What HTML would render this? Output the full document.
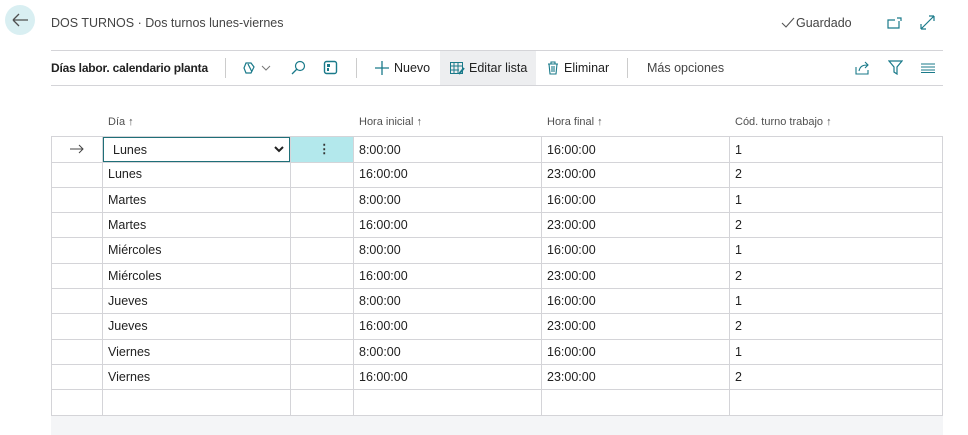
<!DOCTYPE html>
<html><head><meta charset="utf-8"><style>
*{margin:0;padding:0;box-sizing:border-box}
body{width:968px;height:435px;background:#fff;font-family:"Liberation Sans",sans-serif;color:#212121;position:relative;overflow:hidden;font-size:12.5px}
.a{position:absolute;white-space:nowrap}
.hl{position:absolute;height:1px;background:#d4d4d8}
.vl{position:absolute;width:1px;background:#d4d4d8}
.th{position:absolute;top:116px;font-size:11px;color:#505050}
.c{position:absolute;font-size:12.5px}
</style></head><body>
<div class="a" style="left:5px;top:5px;width:30px;height:30px;border-radius:50%;background:#d9eff2"></div>
<svg class="a" style="left:11px;top:13px" width="18" height="14"><path d="M2 7H17M2 7L8 1M2 7L8 13" stroke="#505050" stroke-width="1.3" fill="none"/></svg>
<div class="a" style="left:51px;top:16px;font-size:12.5px;color:#444">DOS TURNOS · Dos turnos lunes-viernes</div>
<svg class="a" style="left:781px;top:17px" width="14" height="11"><path d="M1 6L5 10L13 1" stroke="#555" stroke-width="1.1" fill="none"/></svg>
<div class="a" style="left:796px;top:16px;color:#444">Guardado</div>
<svg class="a" style="left:887px;top:16px" width="16" height="14"><path d="M12 5V12H1V4H8M10 2H14V5" stroke="#1a7a8a" stroke-width="1.2" fill="none"/></svg>
<svg class="a" style="left:920px;top:15px" width="15" height="15"><path d="M1 14L14 1M1 14V9M1 14H6M14 1H9M14 1V6" stroke="#1a7a8a" stroke-width="1.2" fill="none"/></svg>
<div class="hl" style="left:51px;top:50px;width:892px"></div>
<div class="hl" style="left:51px;top:85px;width:892px"></div>
<div class="a" style="left:440px;top:51px;width:96px;height:34px;background:#edeef0"></div>
<div class="a" style="left:51px;top:61px;font-weight:bold;font-size:12px;letter-spacing:-0.2px">Días labor. calendario planta</div>
<div class="vl" style="left:225px;top:58px;height:20px;background:#ccc"></div>
<svg class="a" style="left:242px;top:61px" width="32" height="14"><path d="M4 2H9L12 6L9 12H4L2 7Z M6 3L10 11" stroke="#1a7a8a" stroke-width="1.2" fill="none"/><path d="M20 5L24 9L28 5" stroke="#777" fill="none"/></svg>
<svg class="a" style="left:290px;top:60px" width="16" height="16"><circle cx="10" cy="6" r="4.5" stroke="#1a7a8a" stroke-width="1.2" fill="none"/><path d="M7 9L2 14" stroke="#1a7a8a" stroke-width="1.3"/></svg>
<svg class="a" style="left:323px;top:60px" width="15" height="15"><rect x="1.5" y="1.5" width="12" height="12" rx="2" stroke="#1a7a8a" stroke-width="1.4" fill="none"/><rect x="4" y="4" width="3" height="3" fill="#1a7a8a"/><rect x="4" y="8" width="2" height="3" fill="#1a7a8a"/></svg>
<div class="vl" style="left:356px;top:58px;height:20px;background:#ccc"></div>
<svg class="a" style="left:375px;top:61px" width="14" height="14"><path d="M7 0V14M0 7H14" stroke="#1a7a8a" stroke-width="1.3"/></svg>
<div class="a" style="left:394px;top:61px">Nuevo</div>
<svg class="a" style="left:450px;top:62px" width="15" height="13"><rect x="0.5" y="0.5" width="12" height="11" stroke="#1a7a8a" fill="none"/><path d="M0 4H13M0 8H9M4 0V12M8 0V12" stroke="#1a7a8a"/><path d="M9 12L14 6" stroke="#1a7a8a" stroke-width="2"/></svg>
<div class="a" style="left:469px;top:61px">Editar lista</div>
<svg class="a" style="left:547px;top:61px" width="12" height="14"><path d="M1 3H11M4 3V1H8V3M2 3L3 13H9L10 3M5 5V11M7 5V11" stroke="#1a7a8a" stroke-width="1.1" fill="none"/></svg>
<div class="a" style="left:564px;top:61px">Eliminar</div>
<div class="vl" style="left:627px;top:58px;height:20px;background:#ccc"></div>
<div class="a" style="left:647px;top:61px;color:#444">Más opciones</div>
<svg class="a" style="left:855px;top:61px" width="15" height="14"><path d="M1 6V13H13V9M4 10C5 5 8 4 13 4M10 1L13 4L10 7" stroke="#1a7a8a" stroke-width="1.1" fill="none"/></svg>
<svg class="a" style="left:888px;top:60px" width="15" height="15"><path d="M1 1H14L9 7V14L6 12V7Z" stroke="#1a7a8a" stroke-width="1.2" fill="none"/></svg>
<svg class="a" style="left:921px;top:63px" width="14" height="10"><path d="M0 1H14M0 4H14M0 7H14M0 9.5H14" stroke="#1a7a8a" stroke-width="1.1"/></svg>

<div class="th" style="left:108px">Día ↑</div>
<div class="th" style="left:359px">Hora inicial ↑</div>
<div class="th" style="left:547px">Hora final ↑</div>
<div class="th" style="left:735px">Cód. turno trabajo ↑</div>

<div class="a" style="left:51px;top:415px;width:892px;height:20px;background:#f4f5f7"></div>
<div class="a" style="left:291px;top:137px;width:62px;height:25px;background:#b3e8ec"></div>
<div class="a" style="left:318px;top:141px;color:#333;font-weight:bold">⋮</div>

<div class="hl" style="left:51px;top:136px;width:892px"></div>
<div class="hl" style="left:51px;top:162px;width:892px"></div>
<div class="hl" style="left:51px;top:187px;width:892px"></div>
<div class="hl" style="left:51px;top:212px;width:892px"></div>
<div class="hl" style="left:51px;top:237px;width:892px"></div>
<div class="hl" style="left:51px;top:263px;width:892px"></div>
<div class="hl" style="left:51px;top:288px;width:892px"></div>
<div class="hl" style="left:51px;top:313px;width:892px"></div>
<div class="hl" style="left:51px;top:339px;width:892px"></div>
<div class="hl" style="left:51px;top:364px;width:892px"></div>
<div class="hl" style="left:51px;top:389px;width:892px"></div>
<div class="hl" style="left:51px;top:415px;width:892px"></div>
<div class="vl" style="left:51px;top:136px;height:279px"></div>
<div class="vl" style="left:102px;top:136px;height:279px"></div>
<div class="vl" style="left:290px;top:136px;height:279px"></div>
<div class="vl" style="left:353px;top:136px;height:279px"></div>
<div class="vl" style="left:541px;top:136px;height:279px"></div>
<div class="vl" style="left:729px;top:136px;height:279px"></div>
<div class="vl" style="left:942px;top:136px;height:279px"></div>

<div class="a" style="left:103px;top:137px;width:187px;height:25px;border:1px solid #1f6f78;background:#fff"></div>
<svg class="a" style="left:70px;top:144px" width="14" height="10"><path d="M0 5H13M9 1L13 5L9 9" stroke="#444" fill="none"/></svg>
<svg class="a" style="left:274px;top:146px" width="10" height="7"><path d="M1 1L5 5L9 1" stroke="#222" stroke-width="2" fill="none"/></svg>

<div class="c" style="left:113px;top:143px">Lunes</div><div class="c" style="left:359px;top:143px">8:00:00</div><div class="c" style="left:547px;top:143px">16:00:00</div><div class="c" style="left:735px;top:143px">1</div>
<div class="c" style="left:108px;top:167px">Lunes</div><div class="c" style="left:359px;top:167px">16:00:00</div><div class="c" style="left:547px;top:167px">23:00:00</div><div class="c" style="left:735px;top:167px">2</div>
<div class="c" style="left:108px;top:193px">Martes</div><div class="c" style="left:359px;top:193px">8:00:00</div><div class="c" style="left:547px;top:193px">16:00:00</div><div class="c" style="left:735px;top:193px">1</div>
<div class="c" style="left:108px;top:218px">Martes</div><div class="c" style="left:359px;top:218px">16:00:00</div><div class="c" style="left:547px;top:218px">23:00:00</div><div class="c" style="left:735px;top:218px">2</div>
<div class="c" style="left:108px;top:243px">Miércoles</div><div class="c" style="left:359px;top:243px">8:00:00</div><div class="c" style="left:547px;top:243px">16:00:00</div><div class="c" style="left:735px;top:243px">1</div>
<div class="c" style="left:108px;top:269px">Miércoles</div><div class="c" style="left:359px;top:269px">16:00:00</div><div class="c" style="left:547px;top:269px">23:00:00</div><div class="c" style="left:735px;top:269px">2</div>
<div class="c" style="left:108px;top:294px">Jueves</div><div class="c" style="left:359px;top:294px">8:00:00</div><div class="c" style="left:547px;top:294px">16:00:00</div><div class="c" style="left:735px;top:294px">1</div>
<div class="c" style="left:108px;top:319px">Jueves</div><div class="c" style="left:359px;top:319px">16:00:00</div><div class="c" style="left:547px;top:319px">23:00:00</div><div class="c" style="left:735px;top:319px">2</div>
<div class="c" style="left:108px;top:345px">Viernes</div><div class="c" style="left:359px;top:345px">8:00:00</div><div class="c" style="left:547px;top:345px">16:00:00</div><div class="c" style="left:735px;top:345px">1</div>
<div class="c" style="left:108px;top:370px">Viernes</div><div class="c" style="left:359px;top:370px">16:00:00</div><div class="c" style="left:547px;top:370px">23:00:00</div><div class="c" style="left:735px;top:370px">2</div>
</body></html>
